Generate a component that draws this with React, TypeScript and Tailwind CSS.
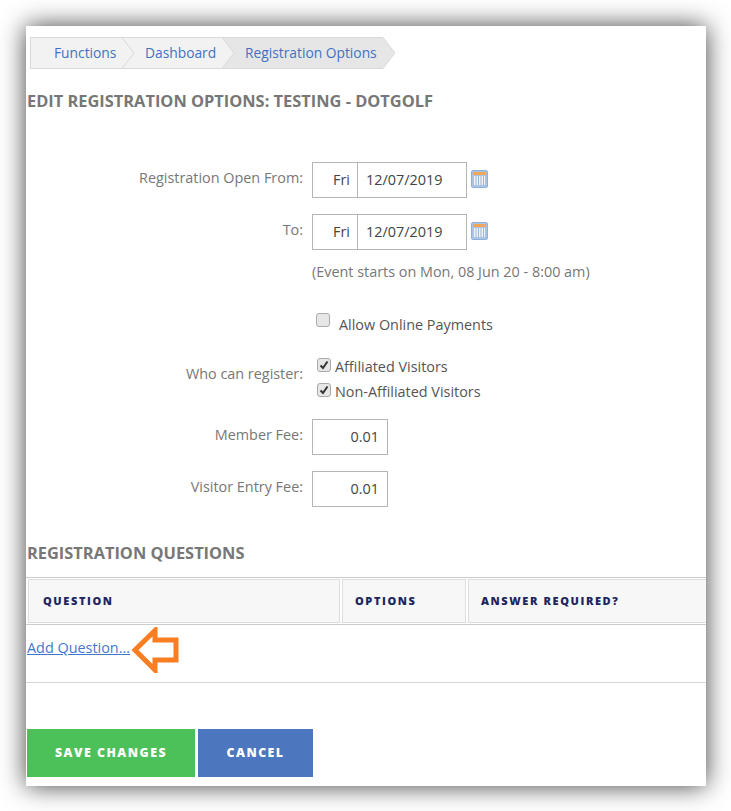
const font = { fontFamily: '"Open Sans", sans-serif' };

const Calendar = () => (
  <svg width="17" height="18" viewBox="0 0 17 18" className="mb-[3px] ml-[4px]">
    <rect x="0.5" y="0.5" width="16" height="17" rx="1.5" fill="#a9c4e4" stroke="#8fb0d8" />
    <rect x="2" y="2" width="13" height="3" fill="#f2a65a" />
    <rect x="3" y="6" width="11" height="9" fill="#eef3f9" />
    <path d="M5 6v9M7.5 6v9M10 6v9M12.5 6v9" stroke="#9fb4cf" strokeWidth="1" />
  </svg>
);

const Check = ({ checked }: { checked?: boolean }) => (
  <span className="flex h-[14px] w-[14px] items-center justify-center rounded-[3px] border border-[#aaaaaa] bg-[#e6e6e6]">
    {checked && (
      <svg width="10" height="10" viewBox="0 0 10 10">
        <path d="M1.5 5.5 4 8 8.5 1.5" fill="none" stroke="#333333" strokeWidth="2" />
      </svg>
    )}
  </span>
);

const Row = ({ label, children, className }: { label: string; children: React.ReactNode; className?: string }) => (
  <div className={`flex items-center ${className}`}>
    <div className="mb-[5px] w-[278px] pr-[1px] text-right text-[14.4px] text-[#777777]">{label}</div>
    <div className="ml-[8px] flex items-center">{children}</div>
  </div>
);

const DateField = () => (
  <>
    <div className="flex h-[36px] w-[155px] items-center border border-[#b5b5b5] text-[14.4px] text-[#444444]">
      <div className="flex h-full w-[45px] items-center justify-end border-r border-[#b5b5b5] pr-[7px]">Fri</div>
      <div className="pl-[8px]">12/07/2019</div>
    </div>
    <Calendar />
  </>
);

const FeeField = () => (
  <div className="flex h-[36px] w-[76px] items-center justify-end border border-[#b5b5b5] pr-[8px] text-[14.4px] text-[#444444]">0.01</div>
);

const Crumb = ({ text, last, className }: { text: string; last?: boolean; className: string }) => (
  <div className={`relative flex h-[32px] items-center border-y border-[#d9d9d9] text-[13.8px] text-[#3f72c4] ${className}`}>
    {text}
    <svg width="13" height="32" viewBox="0 0 13 32" className="absolute right-[-13px] top-[-1px] z-10">
      <path d="M0 0.5 12 16 0 31.5" fill={last ? '#e6e6e6' : '#f2f2f2'} stroke="#d9d9d9" />
    </svg>
  </div>
);

const Th = ({ text, className }: { text: string; className: string }) => (
  <div className={`flex h-[44px] items-center border border-[#dddddd] bg-[#f7f7f7] text-[11px] font-extrabold tracking-[1.6px] text-[#1c2560] ${className}`}>
    {text}
  </div>
);

export default function App() {
  return (
    <div style={font} className="h-[811px] w-[731px] overflow-hidden bg-white pb-[25px] pl-[26px] pr-[25px] pt-[26px]">
      <div className="relative h-[760px] w-[680px] bg-white shadow-[0_0_24px_rgba(0,0,0,0.75)]">
        <div className="pl-[4px] pt-[11px]">
          <div className="flex">
            <Crumb text="Functions" className="w-[92px] border-l bg-[#f2f2f2] pl-[23px]" />
            <Crumb text="Dashboard" className="w-[100px] bg-[#f2f2f2] pl-[23px]" />
            <Crumb text="Registration Options" last className="w-[161px] bg-[#e6e6e6] pl-[23px]" />
          </div>
        </div>
        <h1 className="ml-[1px] mt-[21px] text-[16.4px] font-bold uppercase leading-[22px] text-[#777777]">
          Edit Registration Options: Testing - DotGolf
        </h1>

        <Row label="Registration Open From:" className="mt-[50px]">
          <DateField />
        </Row>
        <Row label="To:" className="mt-[16px]">
          <DateField />
        </Row>
        <div className="ml-[286px] mt-[12px] text-[14.4px] leading-[20px] text-[#777777]">
          (Event starts on Mon, 08 Jun 20 - 8:00 am)
        </div>

        <div className="ml-[290px] mt-[32px] flex items-start text-[14.4px] leading-[20px] text-[#555555]">
          <div className="mt-[-1px]">
            <Check />
          </div>
          <span className="ml-[9px] mt-[1px]">Allow Online Payments</span>
        </div>

        <div className="mt-[22px] flex items-center">
          <div className="mb-[11px] w-[278px] pr-[1px] text-right text-[14.4px] text-[#777777]">Who can register:</div>
          <div className="ml-[13px] flex flex-col gap-[5px] text-[14.4px] leading-[20px] text-[#555555]">
            <div className="flex items-start">
              <div className="mr-[4px] mt-[1px]"><Check checked /></div>
              Affiliated Visitors
            </div>
            <div className="flex items-start">
              <div className="mr-[4px] mt-[1px]"><Check checked /></div>
              Non-Affiliated Visitors
            </div>
          </div>
        </div>

        <Row label="Member Fee:" className="mt-[17px]">
          <FeeField />
        </Row>
        <Row label="Visitor Entry Fee:" className="mt-[16px]">
          <FeeField />
        </Row>

        <h2 className="ml-[1px] mt-[35px] text-[16.4px] font-bold uppercase leading-[22px] text-[#777777]">
          Registration Questions
        </h2>

        <div className="mt-[13px] flex gap-[2px] border-y border-[#cccccc] py-[1px] pl-[2px]">
          <Th text="QUESTION" className="w-[312px] pl-[14px]" />
          <Th text="OPTIONS" className="w-[124px] pl-[12px]" />
          <Th text="ANSWER REQUIRED?" className="flex-1 border-r-0 pl-[12px]" />
        </div>

        <div className="relative h-[58px] border-b border-[#d5d5d5] pl-[1px] pt-[12px] text-[14.4px] leading-[22px]">
          <a className="text-[#3f78cf] underline">Add Question...</a>
          <svg width="48" height="46" viewBox="0 0 48 46" className="absolute left-[105px] top-[2px]">
            <path d="M4 23 24 3.5V13H45V33H24V43Z" fill="none" stroke="#fa7d22" strokeWidth="5" />
          </svg>
        </div>

        <div className="ml-[1px] mt-[46px] flex gap-[3px]">
          <button className="h-[48px] w-[168px] bg-[#4cc15a] text-[12.3px] font-extrabold tracking-[1.5px] text-white">SAVE CHANGES</button>
          <button className="h-[48px] w-[115px] bg-[#4c76be] text-[12.3px] font-extrabold tracking-[1.5px] text-white">CANCEL</button>
        </div>
      </div>
    </div>
  );
}
